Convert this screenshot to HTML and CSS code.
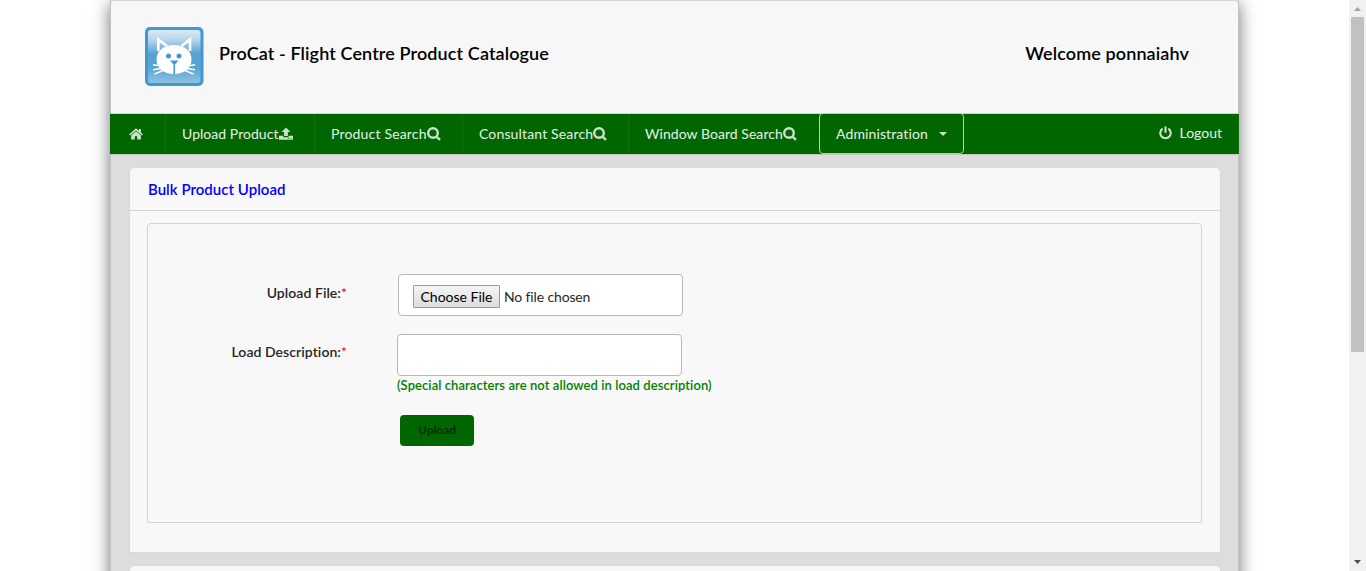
FILE: index.html
```html
<!DOCTYPE html>
<html lang="en">
<head>
<meta charset="utf-8">
<title>ProCat</title>
<link rel="stylesheet" href="styles.css">
</head>
<body>
<div class="viewport">
  <div class="page">
    <header class="header">
      <svg class="logo" viewBox="0 0 60 60" width="60" height="60">
        <defs>
          <linearGradient id="sky" x1="0" y1="0" x2="0" y2="1">
            <stop offset="0" stop-color="#d9e9f5"/><stop offset=".18" stop-color="#b9d7eb"/>
            <stop offset=".45" stop-color="#57a2d2"/><stop offset=".7" stop-color="#58a4d3"/>
            <stop offset="1" stop-color="#8fc1e1"/>
          </linearGradient>
        </defs>
        <rect x="1" y="1" width="58.500" height="59" rx="5" fill="#4399cf"/>
        <rect x="4" y="4" width="52.500" height="53" rx="3" fill="url(#sky)"/>
        <path d="M14.300 25V13.500L23 20M46 25V13.500L37.500 20" fill="none" stroke="#fff" stroke-width="2.600"/>
        <path d="M30 19C40 19 47.500 24.500 47.500 33.500C47.500 42.500 40 48 30 48S12.500 42.500 12.500 33.500C12.500 24.500 20 19 30 19Z" fill="#fff"/>
        <path d="M17 40L9 38.800M17 42.500L9 43.700M19 44.500L10.500 48M43 40L51 38.800M43 42.500L51 43.700M41 44.500L49.500 48" stroke="#fff" stroke-width="1.500"/>
        <circle cx="24.500" cy="30" r="2.500" fill="#4399cf"/><circle cx="35" cy="30" r="2.500" fill="#4399cf"/>
        <path d="M26 34.500H34.500L31 38.500V48H29.500V38.500Z" fill="#4399cf"/>
      </svg>
      <h1 class="title">ProCat - Flight Centre Product Catalogue</h1>
      <div class="welcome">Welcome ponnaiahv</div>
    </header>
    <nav class="nav">
      <a class="item home"><svg width="14" height="12" viewBox="0 0 14 12"><path d="M7 .3L0 6.400L1 7.500L7 2.500L13 7.500L14 6.400L11.900 4.600V1H9.900V2.800Z"/><path d="M7 3.300L2.100 7.400V11.500H5.800V8.300H8.200V11.500H11.900V7.400Z"/></svg></a>
      <a class="item upload"><span>Upload Product</span><svg width="14" height="14" viewBox="0 0 14 14"><path d="M7 .5L11.500 5H8.900V9H5.100V5H2.500ZM0 8.800H4.400V10.200H9.600V8.800H14V12.800H0Z"/><path d="M9 11h1v.8H9zM11.300 11h1v.8h-1z" fill="#060"/></svg></a>
      <a class="item product"><span>Product Search</span><svg width="14" height="14" viewBox="0 0 14 14"><circle cx="6" cy="6" r="4.800" class="ring"/><path class="ring" d="M9.300 9.300L13 12.900"/></svg></a>
      <a class="item consultant"><span>Consultant Search</span><svg width="14" height="14" viewBox="0 0 14 14"><circle cx="6" cy="6" r="4.800" class="ring"/><path class="ring" d="M9.300 9.300L13 12.900"/></svg></a>
      <a class="item window"><span>Window Board Search</span><svg width="14" height="14" viewBox="0 0 14 14"><circle cx="6" cy="6" r="4.800" class="ring"/><path class="ring" d="M9.300 9.300L13 12.900"/></svg></a>
      <a class="item admin"><span>Administration</span><svg width="8" height="4" viewBox="0 0 8 4"><path d="M0 0H8L4 4Z"/></svg></a>
      <a class="item logout"><svg width="13" height="14" viewBox="0 0 13 14"><path class="ring power" d="M3.700 2.700A5.200 5.200 0 1 0 9.300 2.700M6.500 .5V6.800"/></svg><span>Logout</span></a>
    </nav>
    <main class="content">
      <section class="card">
        <h2 class="card-title">Bulk Product Upload</h2>
        <form class="form">
          <div class="row file-row">
            <label class="label">Upload File:<i>*</i></label>
            <div class="field file"><span class="choose">Choose File</span><span class="none">No file chosen</span></div>
          </div>
          <div class="row desc-row">
            <label class="label">Load Description:<i>*</i></label>
            <div class="stack"><div class="field"></div><span class="note">(Special characters are not allowed in load description)</span></div>
          </div>
          <div class="button">Upload</div>
        </form>
      </section>
      <section class="card next"></section>
    </main>
  </div>
  <aside class="scrollbar">
    <svg width="17" height="17" viewBox="0 0 17 17"><path d="M5 11L8.500 7L12 11Z" fill="#a0a0a0"/></svg>
    <div class="thumb"></div>
    <svg class="down" width="17" height="17" viewBox="0 0 17 17"><path d="M5 6L8.500 10L12 6Z" fill="#505050"/></svg>
  </aside>
</div>
</body>
</html>
```
FILE: styles.css
```css
* { box-sizing: border-box; }
body { margin: 0; font-family: Lato, "Liberation Sans", sans-serif; font-size: 14px; background: #fff; overflow: hidden; font-variant-ligatures: none; }
.viewport { display: flex; height: 571px; overflow: hidden; }
.page { width: 1129px; height: 620px; margin-left: 110px; flex: none; background: #ddd; box-shadow: 0 4px 16px #00000090; border-left: 1px solid #c4c4c4; border-right: 1px solid #c4c4c4; }
.header { height: 114px; display: flex; align-items: flex-start; background: #f7f7f7; border: 1px solid #d4d4d5; border-left: 0; border-right: 0; border-radius: 4px 4px 0 0; padding: 0 49px 0 33px; }
.logo { margin-top: 25px; flex: none; }
.title, .welcome { margin: 0; font-size: 18px; font-weight: 600; line-height: 24px; letter-spacing: .11px; color: #000; white-space: nowrap; margin-top: 40px; }
.title { margin-left: 15px; }
.welcome { margin-left: auto; }
.nav { height: 40px; margin: 0 -1px; display: flex; background: #060; color: #e6f0e6; }
.item { display: flex; align-items: center; height: 40px; padding-left: 16px; padding-bottom: 1px; border-right: 1px solid #107010; white-space: nowrap; flex: none; }
.item svg { fill: #cce0cc; flex: none; }
.item .ring { fill: none; stroke: #cce0cc; stroke-width: 2.4; }
.item .power { stroke-width: 2.1; }
.home { width: 56px; padding-left: 19px; }
.upload { width: 149px; }
.upload span { letter-spacing: .04px; }
.product { width: 148px; }
.product span { letter-spacing: .18px; }
.consultant { width: 166px; }
.consultant span { letter-spacing: .15px; }
.window { width: 190px; border-right: 0; }
.window span { letter-spacing: .05px; }
.admin { width: 145px; height: 41px; margin-top: -1px; padding-bottom: 0; border: 1px solid #b2d1b2; border-radius: 4px; }
.admin span { letter-spacing: .12px; }
.admin svg { margin-left: 11px; }
.logout { margin-left: auto; padding-right: 16px; padding-bottom: 3px; }
.logout span { margin-left: 7px; }
.content { border-top: 1px solid #c4c4c4; padding: 12px 18px; display: flex; flex-direction: column; gap: 12px; }
.card { width: 1092px; height: 386px; background: #f8f8f8; border: 1px solid #d8d8d8; border-radius: 5px 5px 0 0; flex: none; }
.card-title { height: 43px; margin: 0; padding-left: 18px; border-bottom: 1px solid #d4d4d5; font-size: 15px; line-height: 43px; font-weight: 600; letter-spacing: .03px; color: #00f; }
.form { width: 1055px; height: 300px; margin: 12px 0 0 17px; padding-top: 50px; border: 1px solid #d4d4d5; border-radius: 4px 4px 0 0; }
.row { display: flex; }
.label { width: 199px; text-align: right; font-weight: 600; letter-spacing: .06px; color: #262626; line-height: 20px; padding-top: 9px; }
.label i { color: #f00; font-style: normal; font-weight: 400; }
.field { width: 285px; height: 42px; background: #fff; border: 1px solid #b8b8b8; border-radius: 4px; }
.file { margin-left: 51px; display: flex; align-items: center; padding: 3px 0 0 14px; color: #262626; }
.choose { width: 87px; height: 23px; line-height: 22px; text-align: center; border: 1px solid #999; border-radius: 1px; background: linear-gradient(#f5f5f5, #dcdcdc); color: #000; }
.none { margin-left: 4px; letter-spacing: -.14px; }
.desc-row { margin-top: 18px; }
.stack { margin-left: 50px; }
.desc-row .label { padding-top: 8px; }
.note { display: block; font-size: 13px; line-height: 18px; font-weight: 600; letter-spacing: .075px; color: #008000; white-space: nowrap; }
.button { width: 74px; height: 31px; margin: 21px 0 0 252px; background: #060; border-radius: 4px; color: #002900; font-size: 12px; line-height: 30px; font-weight: 600; text-align: center; }
.next { height: 80px; }
.scrollbar { width: 17px; height: 571px; margin-left: auto; background: #f1f1f1; display: flex; flex-direction: column; align-items: center; }
.thumb { width: 13px; height: 335px; background: #c1c1c1; }
.down { margin-top: auto; }
```
